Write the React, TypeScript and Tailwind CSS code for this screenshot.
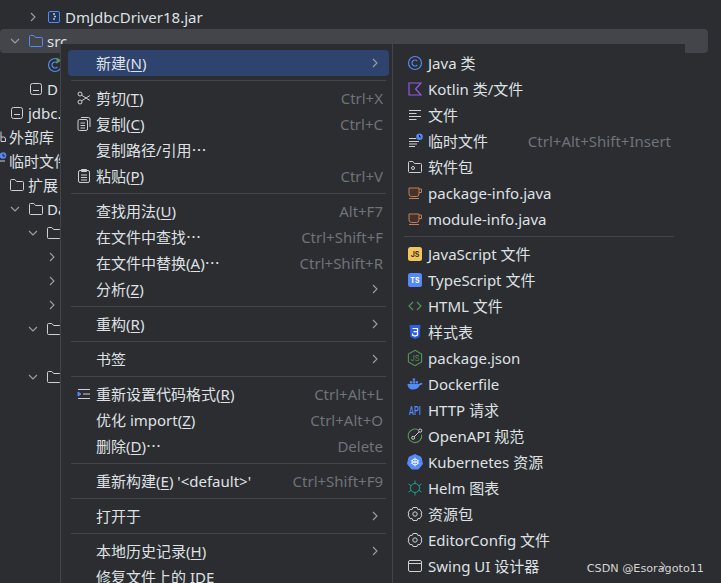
import React from 'react';

type IconProps = { className?: string };

const Svg: React.FC<{ children: React.ReactNode; className?: string }> = ({ children, className }) => (
  <svg viewBox="0 0 16 16" fill="none" className={`w-4 h-4 shrink-0 overflow-visible ${className ?? ''}`}>
    {children}
  </svg>
);

const Chevron: React.FC<{ down?: boolean }> = ({ down }) => (
  <svg viewBox="0 0 16 16" fill="none" className="w-4 h-4 shrink-0">
    <path d={down ? 'M4 6 L8 10 L12 6' : 'M6 4 L10 8 L6 12'} stroke="#9da0a8" strokeWidth="1.1" />
  </svg>
);

const Folder: React.FC<{ color?: string }> = ({ color = '#ced0d6' }) => (
  <Svg>
    <path d="M1.5 3.5 a1 1 0 0 1 1-1 h3.3 l1.7 2 h6 a1 1 0 0 1 1 1 v7 a1 1 0 0 1-1 1 h-11 a1 1 0 0 1-1-1 z" stroke={color} />
  </Svg>
);

const Props: React.FC = () => (
  <Svg>
    <rect x="2.5" y="2.5" width="11" height="11" rx="2" stroke="#ced0d6" />
    <path d="M5 9.5 h6" stroke="#ced0d6" />
  </Svg>
);

const JarIcon = () => (
  <Svg>
    <rect x="2.5" y="2.5" width="11" height="11" rx="1.5" stroke="#548af7" fill="#25324d" />
    <path d="M7 5 h2 M8 7.5 h2 M7 10 h2" stroke="#a8c3fa" strokeWidth="1.4" />
  </Svg>
);

const JavaIcon = () => (
  <Svg>
    <circle cx="8" cy="8" r="6.5" stroke="#548af7" strokeWidth="1.2" />
    <path d="M10.4 6.2 a3 3 0 1 0 0 3.6" stroke="#548af7" strokeWidth="1.2" />
  </Svg>
);

const JavaRunIcon = () => (
  <Svg>
    <circle cx="8" cy="8" r="6.5" stroke="#548af7" strokeWidth="1.2" />
    <path d="M10.4 6.2 a3 3 0 1 0 0 3.6" stroke="#548af7" strokeWidth="1.2" />
    <path d="M9.5 .5 L14.5 3.5 L9.5 6.5 Z" fill="#57965c" />
  </Svg>
);

const KotlinIcon = () => (
  <Svg>
    <path d="M2 2 H14 L8.6 8 L14 14 H2 Z" stroke="#955ae0" strokeWidth="1.2" />
  </Svg>
);

const FileIcon = () => (
  <Svg>
    <path d="M2 3.5 H14 M2 6.5 H9.5 M2 9.5 H14 M2 12.5 H9.5" stroke="#ced0d6" />
  </Svg>
);

const ScratchIcon = () => (
  <Svg>
    <path d="M2 5.5 H9 M2 8.5 H12 M2 11 H10 M2 13.5 H8" stroke="#ced0d6" />
    <circle cx="12.5" cy="3.8" r="3.3" fill="#548af7" />
    <path d="M12.5 2 V4 H14" stroke="#1e1f22" />
  </Svg>
);

const PackageIcon = () => (
  <Svg>
    <path d="M1.5 3.5 a1 1 0 0 1 1-1 h3.3 l1.7 2 h6 a1 1 0 0 1 1 1 v7 a1 1 0 0 1-1 1 h-11 a1 1 0 0 1-1-1 z" stroke="#ced0d6" />
    <circle cx="6" cy="9" r="1.5" stroke="#ced0d6" />
  </Svg>
);

const CupIcon = () => (
  <Svg>
    <path d="M2 3 H12 V9 a2.5 2.5 0 0 1-2.5 2.5 H4.5 A2.5 2.5 0 0 1 2 9 Z" fill="#45322b" stroke="#c77d55" />
    <path d="M12 4 H14.5 V7.5 H12 M2 13.5 H12" stroke="#c77d55" />
  </Svg>
);

const JsIcon = () => (
  <Svg>
    <rect x="1" y="1" width="14" height="14" rx="2.5" fill="#f2c55c" />
    <text x="8" y="11" textAnchor="middle" fontSize="7" fontWeight="700" fill="#3d3223" fontFamily="Inter, sans-serif">JS</text>
  </Svg>
);

const TsIcon = () => (
  <Svg>
    <rect x="1" y="1" width="14" height="14" rx="2.5" fill="#548af7" />
    <text x="8" y="11" textAnchor="middle" fontSize="7" fontWeight="700" fill="#fff" fontFamily="Inter, sans-serif">TS</text>
  </Svg>
);

const HtmlIcon = () => (
  <Svg>
    <path d="M6 4 L2 8 L6 12 M10 4 L14 8 L10 12" stroke="#57965c" strokeWidth="1.1" />
  </Svg>
);

const CssIcon = () => (
  <Svg>
    <path d="M2.5 1 H13.5 L12.5 13 L8 15 L3.5 13 Z" fill="#2b5fe6" />
    <path d="M5.5 4.5 H10.5 V11 L8 12 L5.5 11 V9.5 M6.5 7.7 H10.5" stroke="#fff" strokeWidth="1.2" />
  </Svg>
);

const NodeIcon = () => (
  <Svg>
    <path d="M8 .3 L14.6 4.1 V11.9 L8 15.7 L1.4 11.9 V4.1 Z" stroke="#57965c" strokeWidth="1.1" />
    <text x="8" y="10.7" textAnchor="middle" fontSize="7.5" fill="#57965c" fontFamily="Inter, sans-serif">JS</text>
  </Svg>
);

const DockerIcon = () => (
  <Svg>
    <path d="M.5 8 H12.2 C12.4 7 13.5 6.6 15.5 7.4 C15 8.6 14 9 13 9 C11.8 12 9 13.5 6 13.5 C2.8 13.5 .5 11.5 .5 8 Z" fill="#548af7" />
    <rect x="2.8" y="5.2" width="2.4" height="2.3" fill="#548af7" />
    <rect x="5.7" y="5.2" width="2.4" height="2.3" fill="#548af7" />
    <rect x="5.7" y="2.4" width="2.4" height="2.3" fill="#548af7" />
    <rect x="8.6" y="5.2" width="2.4" height="2.3" fill="#548af7" />
  </Svg>
);

const ApiIcon = () => (
  <Svg>
    <text x="8" y="13" textAnchor="middle" fontSize="12" fontWeight="500" fill="#548af7" fontFamily="Roboto, sans-serif" textLength="12" lengthAdjust="spacingAndGlyphs">API</text>
  </Svg>
);

const OpenApiIcon = () => (
  <Svg>
    <path d="M11 1.8 A6.8 6.8 0 1 0 14.6 6.5" stroke="#57965c" strokeWidth="1.1" />
    <circle cx="13.2" cy="2.6" r="1.6" stroke="#ced0d6" />
    <path d="M7 9 L12 4" stroke="#ced0d6" />
    <circle cx="6.2" cy="9.8" r="1.5" stroke="#ced0d6" fill="#2b2d30" />
  </Svg>
);

const KubeIcon = () => (
  <Svg>
    <path d="M8 .5 L14 3.3 L15.5 9.9 L11.3 15 H4.7 L.5 9.9 L2 3.3 Z" fill="#548af7" stroke="#548af7" strokeLinejoin="round" />
    <circle cx="8" cy="8" r="3" stroke="#fff" strokeWidth=".9" />
    <path d="M8 3.5 V12.5 M3.8 6.5 L12.2 9.5 M12.2 6.5 L3.8 9.5" stroke="#fff" strokeWidth=".7" />
  </Svg>
);

const HelmIcon = () => (
  <Svg>
    <circle cx="8" cy="8" r="4.5" stroke="#21a18e" />
    <path d="M8 .5 V3.5 M8 12.5 V15.5 M1.5 4 L4.2 5.7 M14.5 4 L11.8 5.7 M1.5 12 L4.2 10.3 M14.5 12 L11.8 10.3" stroke="#21a18e" />
  </Svg>
);

const GearIcon = () => (
  <Svg>
    <path d="M6 1.5 H10 L10.8 3.4 L13 3.4 L15 7 L13.8 8 L15 9 L13 12.6 L10.8 12.6 L10 14.5 H6 L5.2 12.6 L3 12.6 L1 9 L2.2 8 L1 7 L3 3.4 L5.2 3.4 Z" stroke="#ced0d6" strokeLinejoin="round" />
    <circle cx="8" cy="8" r="2.2" stroke="#ced0d6" />
  </Svg>
);

const SwingIcon = () => (
  <Svg>
    <rect x="1.5" y="2.5" width="13" height="11" rx="1.5" stroke="#ced0d6" />
    <path d="M1.5 5.5 H14.5" stroke="#ced0d6" />
  </Svg>
);

const CutIcon = () => (
  <Svg>
    <circle cx="4" cy="4" r="2" stroke="#ced0d6" />
    <circle cx="4" cy="12" r="2" stroke="#ced0d6" />
    <path d="M5.6 5.2 L14 10.5 M5.6 10.8 L14 5.5" stroke="#ced0d6" />
  </Svg>
);

const CopyIcon = () => (
  <Svg>
    <rect x="2" y="3.5" width="9.5" height="11" rx="1.5" stroke="#ced0d6" />
    <path d="M5 1.5 H12.5 A1.5 1.5 0 0 1 14 3 V11 M4.5 7 H9 M4.5 9.5 H9 M4.5 12 H9" stroke="#ced0d6" />
  </Svg>
);

const PasteIcon = () => (
  <Svg>
    <rect x="2.5" y="2.5" width="11" height="12" rx="1.5" stroke="#ced0d6" />
    <path d="M5.5 1.5 H10.5 V3.5 H5.5 Z M5 7 H11 M5 9.5 H11 M5 12 H11" stroke="#ced0d6" />
  </Svg>
);

const ReformatIcon = () => (
  <Svg>
    <path d="M7 8 H14 M2 3.5 H14 M2 12.5 H14" stroke="#ced0d6" />
    <path d="M2 6 L5 8 L2 10 Z" fill="#548af7" stroke="#548af7" />
  </Svg>
);

// cut off by the window edge, only the right part shows
const ExternalIcon = () => (
  <Svg>
    <path d="M11 2.5 V12.5 M11 8 H13.5 A2 2 0 0 1 15.5 10 V12.5 H11" stroke="#ced0d6" />
  </Svg>
);

const ScratchTree = () => (
  <Svg>
    <path d="M9 8 H15" stroke="#ced0d6" />
    <circle cx="13" cy="2.5" r="3.3" fill="#548af7" />
    <path d="M13 .8 V3 H15" stroke="#1e1f22" />
  </Svg>
);

// project tree behind the popup
const tree: { pad: string; chevron?: 'right' | 'down'; icon?: React.ReactNode; text?: string; active?: boolean }[] = [
  { pad: 'pl-[25px]', chevron: 'right', icon: <JarIcon />, text: 'DmJdbcDriver18.jar' },
  { pad: 'pl-[7px]', chevron: 'down', icon: <Folder color="#548af7" />, text: 'src', active: true },
  { pad: 'pl-[47px]', icon: <JavaRunIcon /> },
  { pad: 'pl-[28px]', icon: <Props />, text: 'D' },
  { pad: 'pl-[9px]', icon: <Props />, text: 'jdbc.' },
  { pad: '-ml-[10px]', icon: <ExternalIcon />, text: '外部库' },
  { pad: '-ml-[10px]', icon: <ScratchTree />, text: '临时文件' },
  { pad: 'pl-[9px]', icon: <Folder />, text: '扩展' },
  { pad: 'pl-[7px]', chevron: 'down', icon: <Folder />, text: 'Da' },
  { pad: 'pl-[25px]', chevron: 'down', icon: <Folder /> },
  { pad: 'pl-[44px]', chevron: 'right' },
  { pad: 'pl-[44px]', chevron: 'right' },
  { pad: 'pl-[44px]', chevron: 'right' },
  { pad: 'pl-[25px]', chevron: 'down', icon: <Folder /> },
  { pad: 'pl-[25px]' },
  { pad: 'pl-[25px]', chevron: 'down', icon: <Folder /> },
];

type Entry = {
  label?: React.ReactNode;
  icon?: React.ReactNode;
  shortcut?: string;
  arrow?: boolean;
  selected?: boolean;
  sep?: boolean;
};

const M: React.FC<{ children: string }> = ({ children }) => (
  <>
    (<span className="underline underline-offset-2">{children}</span>)
  </>
);

const mainMenu: Entry[] = [
  { label: <>新建<M>N</M></>, arrow: true, selected: true },
  { sep: true },
  { label: <>剪切<M>T</M></>, icon: <CutIcon />, shortcut: 'Ctrl+X' },
  { label: <>复制<M>C</M></>, icon: <CopyIcon />, shortcut: 'Ctrl+C' },
  { label: '复制路径/引用⋯' },
  { label: <>粘贴<M>P</M></>, icon: <PasteIcon />, shortcut: 'Ctrl+V' },
  { sep: true },
  { label: <>查找用法<M>U</M></>, shortcut: 'Alt+F7' },
  { label: '在文件中查找⋯', shortcut: 'Ctrl+Shift+F' },
  { label: <>在文件中替换<M>A</M>⋯</>, shortcut: 'Ctrl+Shift+R' },
  { label: <>分析<M>Z</M></>, arrow: true },
  { sep: true },
  { label: <>重构<M>R</M></>, arrow: true },
  { sep: true },
  { label: '书签', arrow: true },
  { sep: true },
  { label: <>重新设置代码格式<M>R</M></>, icon: <ReformatIcon />, shortcut: 'Ctrl+Alt+L' },
  { label: <>优化 import<M>Z</M></>, shortcut: 'Ctrl+Alt+O' },
  { label: <>删除<M>D</M>⋯</>, shortcut: 'Delete' },
  { sep: true },
  { label: <>重新构建<M>E</M> '&lt;default&gt;'</>, shortcut: 'Ctrl+Shift+F9' },
  { sep: true },
  { label: '打开于', arrow: true },
  { sep: true },
  { label: <>本地历史记录<M>H</M></>, arrow: true },
  { label: '修复文件上的 IDE' },
];

const subMenu: Entry[] = [
  { label: 'Java 类', icon: <JavaIcon /> },
  { label: 'Kotlin 类/文件', icon: <KotlinIcon /> },
  { label: '文件', icon: <FileIcon /> },
  { label: '临时文件', icon: <ScratchIcon />, shortcut: 'Ctrl+Alt+Shift+Insert' },
  { label: '软件包', icon: <PackageIcon /> },
  { label: 'package-info.java', icon: <CupIcon /> },
  { label: 'module-info.java', icon: <CupIcon /> },
  { sep: true },
  { label: 'JavaScript 文件', icon: <JsIcon /> },
  { label: 'TypeScript 文件', icon: <TsIcon /> },
  { label: 'HTML 文件', icon: <HtmlIcon /> },
  { label: '样式表', icon: <CssIcon /> },
  { label: 'package.json', icon: <NodeIcon /> },
  { label: 'Dockerfile', icon: <DockerIcon /> },
  { label: 'HTTP 请求', icon: <ApiIcon /> },
  { label: 'OpenAPI 规范', icon: <OpenApiIcon /> },
  { label: 'Kubernetes 资源', icon: <KubeIcon /> },
  { label: 'Helm 图表', icon: <HelmIcon /> },
  { label: '资源包', icon: <GearIcon /> },
  { label: 'EditorConfig 文件', icon: <GearIcon /> },
  { label: 'Swing UI 设计器', icon: <SwingIcon />, arrow: true },
  { sep: true },
];

const MenuList: React.FC<{ items: Entry[]; sub?: boolean }> = ({ items, sub }) => (
  <>
    {items.map((it, i) =>
      it.sep ? (
        <div key={i} className="h-[9px] shrink-0 flex items-center px-[3px] pb-px">
          <div className="h-px w-full bg-[#43454a]" />
        </div>
      ) : (
        <div
          key={i}
          className={`h-[26px] shrink-0 flex items-center pr-1.5 rounded-[4px] ${sub ? 'pl-1.5' : 'pl-2'} ${it.selected ? 'bg-[#2e436e]' : ''}`}
        >
          <span className={`w-4 h-4 shrink-0 flex ${sub ? 'mr-[5px]' : 'mr-1'}`}>{it.icon}</span>
          <span className="whitespace-nowrap text-[#dfe1e5]">{it.label}</span>
          <span className="ml-auto whitespace-nowrap text-[#6f737a]">{it.shortcut}</span>
          {it.arrow && <Chevron />}
        </div>
      )
    )}
  </>
);

const App: React.FC = () => {
  return (
    <div
      className="relative w-[721px] h-[583px] overflow-hidden bg-[#2b2d30] text-[15px] leading-6 text-[#dfe1e5]"
      style={{ fontFamily: '"Noto Sans", "Noto Sans CJK SC", sans-serif' }}
    >
      {/* project tree */}
      <div className="flex flex-col pt-[5px] pr-[13px]">
        {tree.map((row, i) => (
          <div key={i} className={`h-6 shrink-0 flex items-center rounded-[4px] ${row.pad} ${row.active ? 'bg-[#43454a]' : ''}`}>
            {row.chevron && (
              <span className="w-[21px] shrink-0 flex">
                <Chevron down={row.chevron === 'down'} />
              </span>
            )}
            {row.icon}
            {row.text && <span className="ml-[3px] whitespace-nowrap">{row.text}</span>}
          </div>
        ))}
      </div>

      {/* context menu */}
      <div className="absolute left-[60px] top-[44px] w-[333px] h-[560px] bg-[#2b2d30] border-l border-[#43454a] pl-[7px] pr-1 pt-1.5 flex flex-col">
        <MenuList items={mainMenu} />
      </div>

      {/* new submenu */}
      <div className="absolute left-[392px] top-[44px] w-[293px] h-[560px] bg-[#2b2d30] border-l border-[#43454a] pl-2 pr-2 pt-1.5 flex flex-col">
        <MenuList items={subMenu} sub />
      </div>

      {/* watermark */}
      <div
        className="absolute right-[17px] top-[561px] text-[11.2px] leading-4 text-[#d4d4d4] whitespace-nowrap"
        style={{ fontFamily: '"DejaVu Sans", sans-serif' }}
      >
        CSDN @Esoragoto11
      </div>
    </div>
  );
};

export default App;
